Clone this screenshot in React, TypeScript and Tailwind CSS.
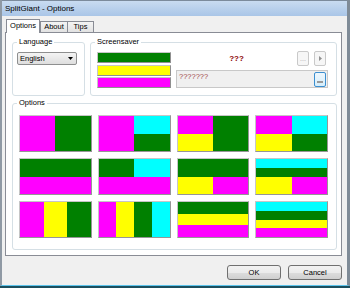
import React from "react";

const M = "bg-[#ff00ff]";
const G = "bg-[#008000]";
const C = "bg-[#00ffff]";
const Y = "bg-[#ffff00]";

function Thumb({ col, children }: { col?: boolean; children: React.ReactNode }) {
  return (
    <div
      className={
        "h-[37px] border border-[#c6c6c6] border-r-[#969696] border-b-[#969696] flex overflow-hidden " +
        (col ? "flex-col" : "flex-row")
      }
    >
      {children}
    </div>
  );
}

function B({ c, cls = "flex-1" }: { c: string; cls?: string }) {
  return <div className={c + " " + cls} />;
}

export default function App() {
  return (
    <div className="w-[350px] h-[288px] bg-[#1b4f5e] overflow-hidden font-['Liberation_Sans',Arial,sans-serif] text-[7.5px] text-black leading-none">
      <div className="h-[286px] flex flex-col bg-[#f0f0f0] border-l-2 border-l-[#8f99a4] border-r-[3px] border-r-[#7f8b97] border-b border-b-[#5cc4ec]">
        {/* Title bar */}
        <div className="h-[16px] shrink-0 border-t border-t-[#7c8b9c] bg-gradient-to-b from-[#c9dcf1] to-[#a9c5e7] flex items-center pl-[3px] text-[8px]">
          SplitGiant - Options
        </div>

        <div className="flex-1 flex flex-col pl-[3px] pr-[5px] pt-[3px]">
          {/* Tabs */}
          <div className="h-[13px] flex items-end">
            <div className="relative z-10 -mb-px ml-[1px] h-[14px] w-[34px] border border-b-0 border-[#898c95] bg-white flex items-center justify-center pb-[1px]">
              Options
            </div>
            <div className="h-[11px] w-[28px] border border-b-0 border-[#898c95] bg-gradient-to-b from-[#f4f4f4] to-[#e2e2e2] flex items-center justify-center">
              About
            </div>
            <div className="h-[11px] w-[26px] border border-b-0 border-l-0 border-[#898c95] bg-gradient-to-b from-[#f4f4f4] to-[#e2e2e2] flex items-center justify-center">
              Tips
            </div>
          </div>

          {/* Panel */}
          <div className="h-[224px] border border-[#898c95] bg-white flex flex-col pl-[6px] pr-[4px] pt-[4px] pb-[5px]">
            <div className="h-[59px] flex gap-[5px]">
              {/* Language */}
              <fieldset className="w-[73px] border border-[#d5dfe5] rounded-[3px] pl-[4px] pr-[4px] pt-[5px]">
                <legend className="px-[2px] leading-[10px]">Language</legend>
                <div className="w-[60px] h-[13px] border border-[#8e8f8f] rounded-[2px] bg-gradient-to-b from-[#f4f4f4] to-[#dedede] flex items-center justify-between pl-[2px] pr-[3px]">
                  <span>English</span>
                  <svg width="5" height="3" viewBox="0 0 5 3">
                    <path d="M0 0H5L2.5 3Z" fill="#000" />
                  </svg>
                </div>
              </fieldset>

              {/* Screensaver */}
              <fieldset className="flex-1 border border-[#d5dfe5] rounded-[3px] pl-[6px] pr-[8px] pt-[4px]">
                <legend className="-ml-[2px] px-[2px] leading-[10px]">Screensaver</legend>
                <div className="flex gap-[5px]">
                  <div className="w-[74px] flex flex-col gap-[1.5px] pt-[1px]">
                    <div className="h-[11px] bg-[#008000] border border-[#c6c6c6] border-r-[#8f8f8f] border-b-[#8f8f8f]" />
                    <div className="h-[11px] bg-[#ffff00] border border-[#c6c6c6] border-r-[#8f8f8f] border-b-[#8f8f8f]" />
                    <div className="h-[11px] bg-[#ff00ff] border border-[#c6c6c6] border-r-[#8f8f8f] border-b-[#8f8f8f]" />
                  </div>
                  <div className="flex-1 flex flex-col">
                    <div className="h-[15px] flex items-center">
                      <div className="flex-1 text-center font-bold text-[8px] text-[#8b0000] pt-[1px]">???</div>
                      <div className="w-[12px] h-[15px] border border-[#c9c9c9] rounded-[2px] bg-[#f6f6f6] flex items-end justify-center pb-[3px] text-[#a8a8a8] text-[7px]">
                        ...
                      </div>
                      <div className="ml-[5px] mr-[2px] w-[12px] h-[15px] border border-[#c9c9c9] rounded-[2px] bg-[#f6f6f6] flex items-center justify-center">
                        <svg width="3" height="5" viewBox="0 0 3 5">
                          <path d="M0 0L3 2.5L0 5Z" fill="#909090" />
                        </svg>
                      </div>
                    </div>
                    <div className="mt-[4px] h-[18px] border border-[#c8c8c8] bg-[#f0f0f0] flex items-start justify-between pl-[2px]">
                      <span className="pt-[2px] text-[#a04848]">???????</span>
                      <div className="mt-[1px] mr-[1px] w-[12px] h-[15px] border border-[#3c8fd0] rounded-[2px] bg-gradient-to-b from-[#eef7fd] to-[#d6eefb] flex items-end justify-center pb-[3px]">
                        <div className="w-[6px] h-[2px] bg-[#9a9a9a]" />
                      </div>
                    </div>
                  </div>
                </div>
              </fieldset>
            </div>

            {/* Options */}
            <fieldset className="mt-[2px] flex-1 border border-[#d5dfe5] rounded-[3px] pl-[6px] pr-[8px] pt-[7px]">
              <legend className="-ml-[2px] px-[2px] leading-[10px]">Options</legend>
              <div className="grid grid-cols-4 gap-x-[6px] gap-y-[6px]">
                <Thumb>
                  <B c={M} />
                  <B c={G} />
                </Thumb>
                <Thumb>
                  <B c={M} />
                  <div className="flex-1 flex flex-col">
                    <B c={C} />
                    <B c={G} />
                  </div>
                </Thumb>
                <Thumb>
                  <div className="flex-1 flex flex-col">
                    <B c={M} />
                    <B c={Y} />
                  </div>
                  <B c={G} />
                </Thumb>
                <Thumb>
                  <div className="flex-1 flex flex-col">
                    <B c={M} />
                    <B c={Y} />
                  </div>
                  <div className="flex-1 flex flex-col">
                    <B c={C} />
                    <B c={G} />
                  </div>
                </Thumb>

                <Thumb col>
                  <B c={G} />
                  <B c={M} />
                </Thumb>
                <Thumb col>
                  <div className="flex-1 flex">
                    <B c={G} />
                    <B c={C} />
                  </div>
                  <B c={M} />
                </Thumb>
                <Thumb col>
                  <B c={G} />
                  <div className="flex-1 flex">
                    <B c={Y} />
                    <B c={M} />
                  </div>
                </Thumb>
                <Thumb col>
                  <B c={C} />
                  <B c={G} />
                  <div className="flex-[2] flex">
                    <B c={Y} />
                    <B c={M} />
                  </div>
                </Thumb>

                <Thumb>
                  <B c={M} />
                  <B c={Y} />
                  <B c={G} />
                </Thumb>
                <Thumb>
                  <B c={M} />
                  <B c={Y} />
                  <B c={G} />
                  <B c={C} />
                </Thumb>
                <Thumb col>
                  <B c={G} />
                  <B c={Y} />
                  <B c={M} />
                </Thumb>
                <Thumb col>
                  <B c={C} />
                  <B c={G} />
                  <B c={Y} />
                  <B c={M} />
                </Thumb>
              </div>
            </fieldset>
          </div>

          {/* Buttons */}
          <div className="mt-[9px] flex justify-end gap-[7px]">
            <div className="w-[54px] h-[15px] border border-[#707070] rounded-[3px] bg-[linear-gradient(#f2f2f2_0%,#ebebeb_50%,#dddddd_51%,#cfcfcf_100%)] flex items-center justify-center">
              OK
            </div>
            <div className="w-[54px] h-[15px] border border-[#707070] rounded-[3px] bg-[linear-gradient(#f2f2f2_0%,#ebebeb_50%,#dddddd_51%,#cfcfcf_100%)] flex items-center justify-center">
              Cancel
            </div>
          </div>
        </div>
      </div>
    </div>
  );
}
